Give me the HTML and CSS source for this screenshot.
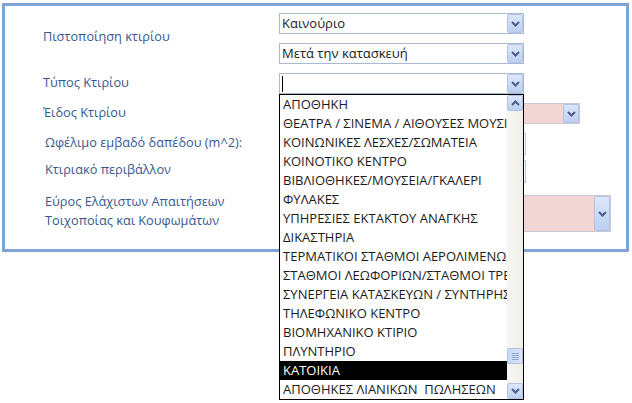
FILE: index.html
```html
<!DOCTYPE html>
<html lang="el">
<head>
    <meta charset="UTF-8">
    <title>Πιστοποίηση κτιρίου</title>
    <link rel="stylesheet" href="styles.css">
</head>
<body>
    <div class="frame">
        <div class="row row-cert">
            <div class="label">Πιστοποίηση κτιρίου</div>
            <div class="controls">
                <div class="combo">
                    <span class="value">Καινούριο</span>
                    <span class="drop"><svg width="9" height="6" viewBox="0 0 9 6"><path d="M1 1L4.5 4.5L8 1" fill="none" stroke="#4b5e88" stroke-width="2"/></svg></span>
                </div>
                <div class="combo">
                    <span class="value">Μετά την κατασκευή</span>
                    <span class="drop"><svg width="9" height="6" viewBox="0 0 9 6"><path d="M1 1L4.5 4.5L8 1" fill="none" stroke="#4b5e88" stroke-width="2"/></svg></span>
                </div>
            </div>
        </div>

        <div class="row">
            <div class="label">Τύπος Κτιρίου</div>
            <div class="controls">
                <div class="combo open">
                    <span class="value"><span class="caret"></span></span>
                    <span class="drop"><svg width="9" height="6" viewBox="0 0 9 6"><path d="M1 1L4.5 4.5L8 1" fill="none" stroke="#4b5e88" stroke-width="2"/></svg></span>

                    <div class="list">
                        <ul class="items">
                            <li>ΑΠΟΘΗΚΗ</li>
                            <li>ΘΕΑΤΡΑ / ΣΙΝΕΜΑ / ΑΙΘΟΥΣΕΣ ΜΟΥΣΙΚΗΣ</li>
                            <li>ΚΟΙΝΩΝΙΚΕΣ ΛΕΣΧΕΣ/ΣΩΜΑΤΕΙΑ</li>
                            <li>ΚΟΙΝΟΤΙΚΟ ΚΕΝΤΡΟ</li>
                            <li>ΒΙΒΛΙΟΘΗΚΕΣ/ΜΟΥΣΕΙΑ/ΓΚΑΛΕΡΙ</li>
                            <li>ΦΥΛΑΚΕΣ</li>
                            <li>ΥΠΗΡΕΣΙΕΣ ΕΚΤΑΚΤΟΥ ΑΝΑΓΚΗΣ</li>
                            <li>ΔΙΚΑΣΤΗΡΙΑ</li>
                            <li>ΤΕΡΜΑΤΙΚΟΙ ΣΤΑΘΜΟΙ ΑΕΡΟΛΙΜΕΝΩΝ</li>
                            <li>ΣΤΑΘΜΟΙ ΛΕΩΦΟΡΙΩΝ/ΣΤΑΘΜΟΙ ΤΡΕΝΩΝ</li>
                            <li>ΣΥΝΕΡΓΕΙΑ ΚΑΤΑΣΚΕΥΩΝ / ΣΥΝΤΗΡΗΣΗΣ</li>
                            <li>ΤΗΛΕΦΩΝΙΚΟ ΚΕΝΤΡΟ</li>
                            <li>ΒΙΟΜΗΧΑΝΙΚΟ ΚΤΙΡΙΟ</li>
                            <li>ΠΛΥΝΤΗΡΙΟ</li>
                            <li class="selected">ΚΑΤΟΙΚΙΑ</li>
                            <li>ΑΠΟΘΗΚΕΣ ΛΙΑΝΙΚΩΝ&nbsp; ΠΩΛΗΣΕΩΝ</li>
                        </ul>
                        <div class="scrollbar">
                            <span class="sbtn"><svg width="9" height="6" viewBox="0 0 9 6"><path d="M1 5L4.5 1.5L8 5" fill="none" stroke="#4b5e88" stroke-width="2"/></svg></span>
                            <span class="thumb"><i></i><i></i><i></i><i></i></span>
                            <span class="track-rest"></span>
                            <span class="sbtn"><svg width="9" height="6" viewBox="0 0 9 6"><path d="M1 1L4.5 4.5L8 1" fill="none" stroke="#4b5e88" stroke-width="2"/></svg></span>
                        </div>
                    </div>
                </div>
            </div>
        </div>

        <div class="row">
            <div class="label">Έιδος Κτιρίου</div>
            <div class="controls">
                <div class="combo pink w-kind">
                    <span class="value"></span>
                    <span class="drop"><svg width="9" height="6" viewBox="0 0 9 6"><path d="M1 1L4.5 4.5L8 1" fill="none" stroke="#4b5e88" stroke-width="2"/></svg></span>
                </div>
            </div>
        </div>

        <div class="row">
            <div class="label inset">Ωφέλιμο εμβαδό δαπέδου (m^2):</div>
            <div class="controls">
                <div class="textbox h-22"></div>
            </div>
        </div>

        <div class="row row-env">
            <div class="label inset">Κτιριακό περιβάλλον</div>
            <div class="controls">
                <div class="textbox h-23"></div>
            </div>
        </div>

        <div class="row row-range">
            <div class="label inset">Εύρος Ελάχιστων Απαιτήσεων<br>Τοιχοποίας και Κουφωμάτων</div>
            <div class="controls">
                <div class="combo pink w-range">
                    <span class="value"></span>
                    <span class="drop"><svg width="9" height="6" viewBox="0 0 9 6"><path d="M1 1L4.5 4.5L8 1" fill="none" stroke="#4b5e88" stroke-width="2"/></svg></span>
                </div>
            </div>
        </div>
    </div>
</body>
</html>
```

FILE: styles.css
```css
html {
    background: #ffffff;
}

body {
    margin: 0;
    min-height: 403px;
    font-family: 'Open Sans', 'Noto Sans', sans-serif;
}

.frame {
    margin: 3px 0 0 2px;
    width: 621px;
    height: 236px;
    border: 3px solid #7ea3d6;
    padding-top: 7px;
    box-sizing: content-box;
}

.row {
    display: flex;
    align-items: flex-start;
    margin-bottom: 9px;
}

.label {
    width: 236px;
    padding: 1px 0 0 38px;
    font-size: 12.75px;
    line-height: 16px;
    color: #37588f;
    white-space: nowrap;
}

.label.inset {
    width: 234px;
    padding-left: 40px;
}

.row-cert .label {
    padding-top: 15px;
}

.row-env {
    margin-top: -4px;
    margin-bottom: 12px;
}

.row-range .label {
    line-height: 19px;
    margin-top: -4px;
}

.controls {
    display: flex;
    flex-direction: column;
    gap: 9px;
}

/* combos */
.combo {
    position: relative;
    display: flex;
    width: 245px;
    height: 21px;
    border: 1px solid #a9bad6;
    box-sizing: border-box;
    background: #ffffff;
}

.combo .value {
    flex: 1;
    padding-left: 2px;
    font-size: 13px;
    line-height: 19px;
    color: #1b1b1b;
    white-space: nowrap;
    overflow: hidden;
}

.caret {
    display: inline-block;
    width: 1px;
    height: 16px;
    margin-top: 2px;
    background: #000;
    vertical-align: top;
}

.drop, .sbtn {
    width: 16px;
    display: flex;
    align-items: center;
    justify-content: center;
    border: 1px solid #b2c3e4;
    box-sizing: border-box;
    border-radius: 2px;
    background: linear-gradient(#dde7fa, #bccff3);
}

.combo.pink {
    background: #f2d6d6;
    border-color: #c8c8d4;
}

.w-kind {
    width: 301px;
}

.w-range {
    width: 332px;
    height: 37px;
}

.textbox {
    width: 247px;
    border: 1px solid #b8c4d6;
    box-sizing: border-box;
    background: #fff;
}

.h-22 { height: 22px; }
.h-23 { height: 23px; }

/* open list */
.list {
    position: absolute;
    top: calc(100% + 1px);
    left: -1px;
    width: 245px;
    height: 306px;
    border: 1px solid #000;
    box-sizing: border-box;
    background: #fff;
    display: flex;
    z-index: 5;
}

.items {
    list-style: none;
    margin: 0;
    padding: 0;
    flex: 1;
    min-width: 0;
}

.items li {
    height: 19px;
    line-height: 19px;
    padding-left: 3px;
    font-size: 13px;
    color: #1b1b1b;
    white-space: nowrap;
    overflow: hidden;
}

.items li.selected {
    background: #000;
    color: #fff;
}

.scrollbar {
    width: 16px;
    flex: none;
    display: flex;
    flex-direction: column;
    background: linear-gradient(90deg, #f7f6f2, #efeee8);
}

.sbtn {
    height: 16px;
    flex: none;
}

.thumb {
    margin-top: 237px;
    height: 16px;
    flex: none;
    border: 1px solid #b2c3e4;
    border-radius: 2px;
    box-sizing: border-box;
    background: linear-gradient(90deg, #c9d8f5, #dbe5f9);
    display: flex;
    flex-direction: column;
    align-items: center;
    justify-content: center;
    gap: 1px;
}

.thumb i {
    width: 7px;
    height: 1px;
    background: #8ea6d6;
}

.track-rest {
    flex: 1;
}
```
